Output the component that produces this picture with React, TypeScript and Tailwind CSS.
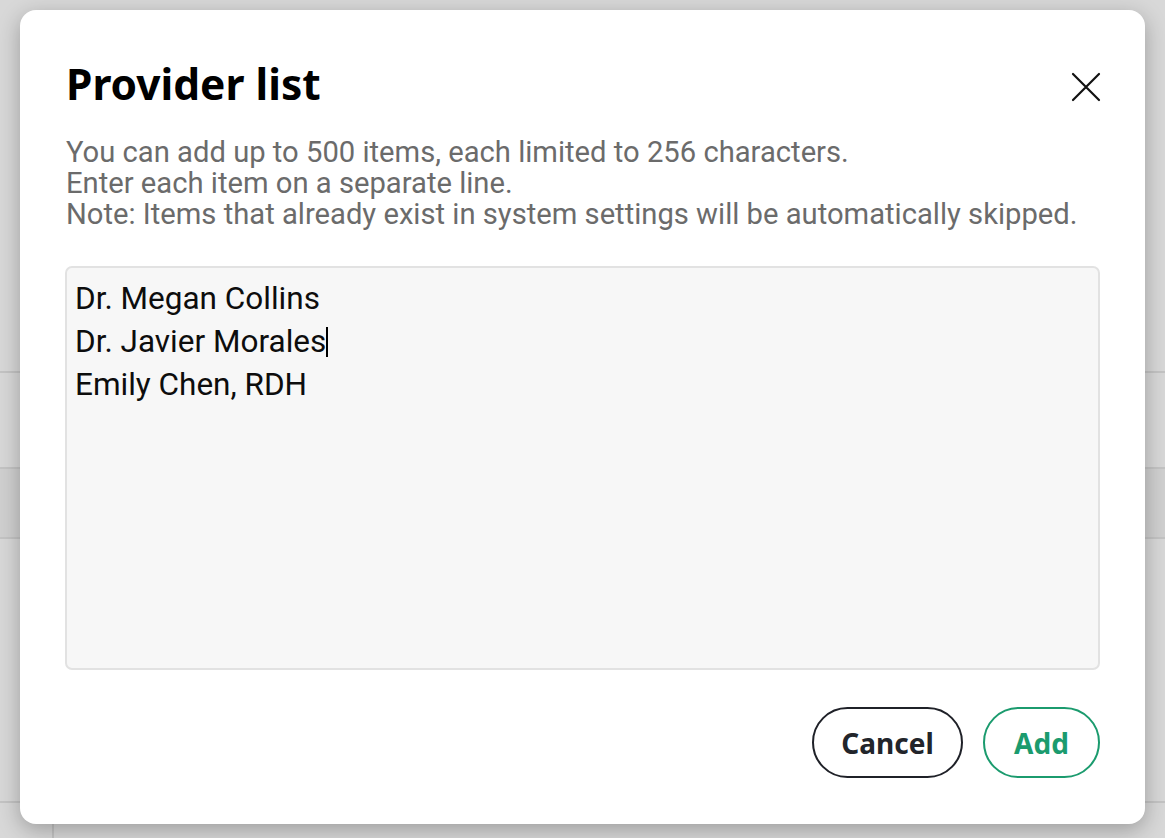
import { useState } from "react";

const initialItems = ["Dr. Megan Collins", "Dr. Javier Morales", "Emily Chen, RDH"].join("\n");

function CloseIcon() {
  return (
    <svg width="30" height="30" viewBox="0 0 30 30" fill="none">
      <path d="M2 2L28 28M28 2L2 28" stroke="#111" strokeWidth="2.2" strokeLinecap="round" />
    </svg>
  );
}

// page behind the dimmed overlay
function PageBehind() {
  return (
    <div className="flex h-[838px] flex-col bg-[#d8d8d8]">
      <div className="h-[373px] border-b-2 border-[#c4c4c4]" />
      <div className="h-[96px] border-b-2 border-[#c4c4c4]" />
      <div className="h-[70px] border-b-2 border-[#c4c4c4] bg-[#d0d0d0]" />
      <div className="h-[264px] border-b-2 border-[#c4c4c4]" />
      <div className="flex flex-1">
        <div className="w-[54px] border-r-2 border-[#c4c4c4]" />
      </div>
    </div>
  );
}

export default function App() {
  const [value, setValue] = useState(initialItems);

  return (
    <div className="relative h-[838px] w-full overflow-hidden">
      <PageBehind />
      <div className="absolute inset-0 flex items-start justify-center pt-[10px]">
        <div className="flex h-[814px] w-[1125px] flex-col rounded-[16px] bg-white px-[45px] pt-[51px] pb-[46px] shadow-[0_6px_22px_rgba(0,0,0,0.28)]">
          <div className="flex items-start justify-between">
            <h2 className="pl-[1px] font-['Noto_Sans',sans-serif] text-[42.5px] leading-[46px] font-bold text-black">
              Provider list
            </h2>
            <button type="button" className="mt-[11px] -mr-[1px]">
              <CloseIcon />
            </button>
          </div>

          <div className="mt-[30px] pl-[1px] font-['Roboto',sans-serif] text-[29.2px] leading-[31px] text-[#6b6b6b]">
            <p>You can add up to 500 items, each limited to 256 characters.</p>
            <p>Enter each item on a separate line.</p>
            <p>Note: Items that already exist in system settings will be automatically skipped.</p>
          </div>

          <div className="relative mt-[36px]">
            <textarea
              value={value}
              onChange={(e) => setValue(e.target.value)}
              className="block h-[404px] w-full resize-none rounded-[7px] border-2 border-[#e2e2e2] bg-[#f7f7f7] px-[8px] pt-[9px] font-['Roboto',sans-serif] text-[31.5px] leading-[43px] text-[#0d0d0d] outline-none"
            />
            {/* text caret after the second entry */}
            <span className="pointer-events-none absolute top-[61px] left-[261px] h-[30px] w-[1.5px] bg-black" />
          </div>

          <div className="mt-auto flex justify-end gap-[20px]">
            <button
              type="button"
              className="h-[71px] w-[151px] rounded-full border-2 border-[#1f2128] font-['Noto_Sans',sans-serif] text-[28px] font-bold text-[#22252b]"
            >
              Cancel
            </button>
            <button
              type="button"
              className="h-[71px] w-[117px] rounded-full border-2 border-[#1b9b6e] font-['Noto_Sans',sans-serif] text-[28px] font-bold text-[#1b9b6e]"
            >
              Add
            </button>
          </div>
        </div>
      </div>
    </div>
  );
}
